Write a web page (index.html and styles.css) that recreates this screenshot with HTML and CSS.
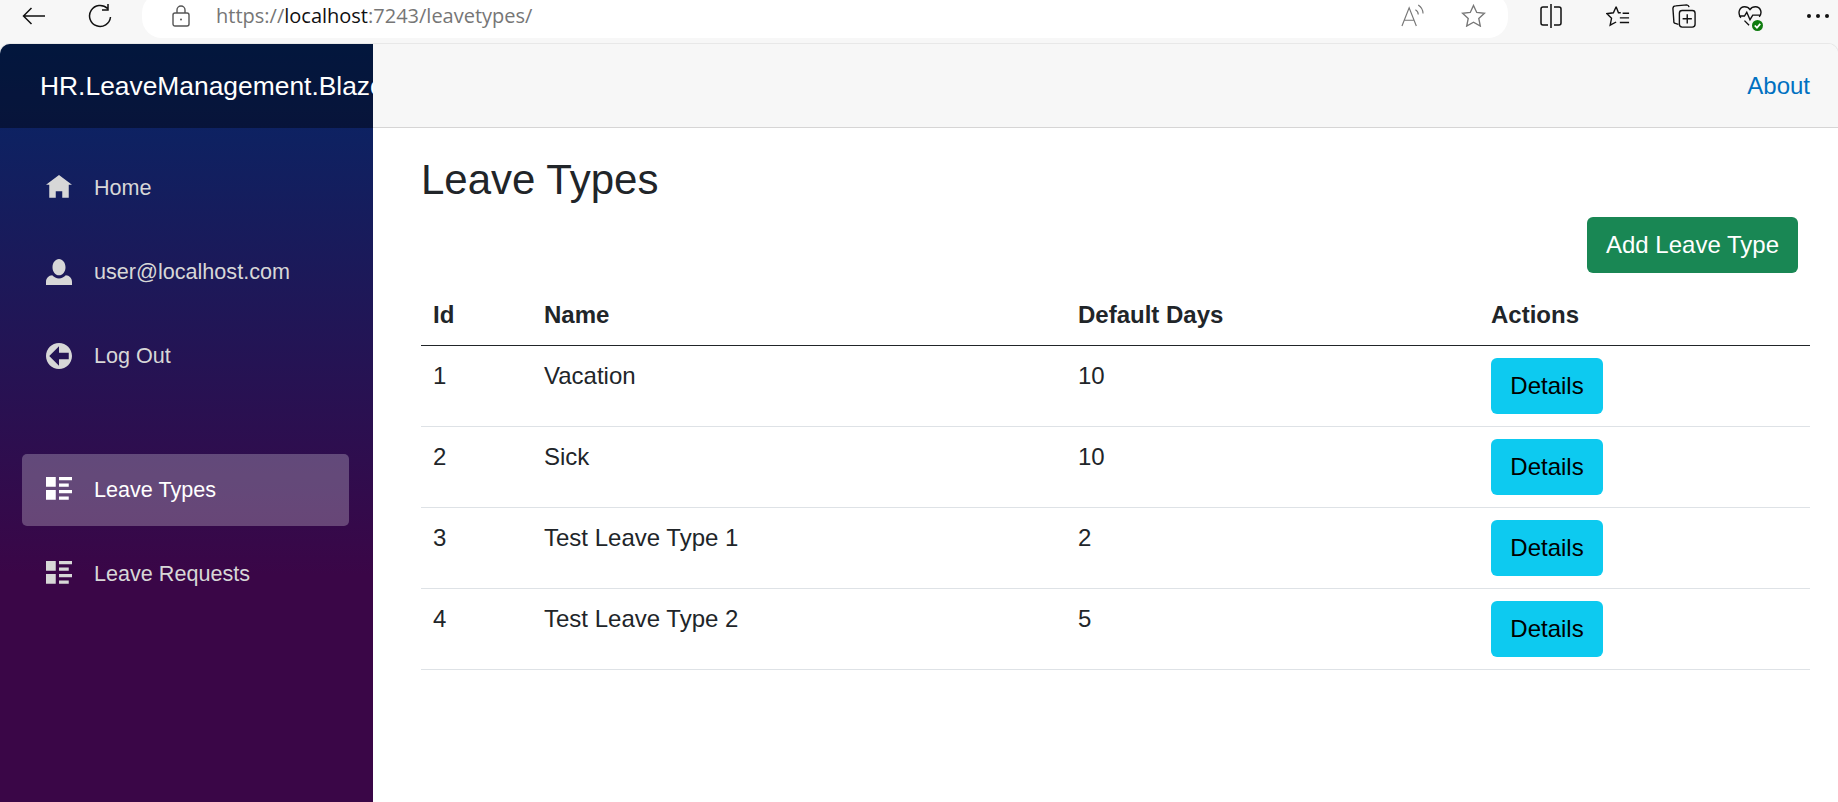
FILE: index.html
```html
<!DOCTYPE html>
<html lang="en">

<head>
    <meta charset="UTF-8">
    <meta name="viewport" content="width=device-width, initial-scale=1.0">
    <title>Leave Types</title>
    <link rel="stylesheet" href="styles.css">
</head>

<body>

    <div class="browser-bar">
        <svg class="tool tool-back" viewBox="0 0 23 18"><path d="M23 9H1.500M9.500 1 1.500 9l8 8" /></svg>
        <svg class="tool tool-reload" viewBox="0 0 24 24"><path d="M19.500 4.500A10.500 10.500 0 1 0 22.500 13M20 0v6h-6" /></svg>
        <div class="address">
            <svg class="lock" viewBox="0 0 18 22"><rect x="1" y="8" width="16" height="13" rx="2" /><path d="M5 8V5a4 4 0 0 1 8 0v3" /><circle class="dot" cx="9" cy="14.500" r="1" /></svg>
            <span class="url">https://<b>localhost</b>:7243/leavetypes/</span>
            <svg class="read" viewBox="0 0 24 24"><path d="M1 23 8.500 4 16 23M3.500 17h10M15 6c2 1 3 3 3 5M18 1c3 2 5 5 5 9" /></svg>
            <svg class="star" viewBox="0 0 26 24"><path d="m13 1.500 3.400 7.300 8 .9-5.900 5.400 1.600 7.900-7.100-4-7.100 4 1.600-7.900L1.600 9.700l8-.9z" /></svg>
        </div>
        <svg class="tool tool-split" viewBox="0 0 24 24"><path d="M9 3H4a2 2 0 0 0-2 2v14a2 2 0 0 0 2 2h5M15 3h5a2 2 0 0 1 2 2v14a2 2 0 0 1-2 2h-5M12 0v24" /></svg>
        <svg class="tool tool-favs" viewBox="0 0 26 24"><path d="M11 2 8 8.500 1 9.500l5 5L4.500 22l6.500-3.500M11 2l2.500 6.500H16M18 9h7M15 14h10M15 19h10" /></svg>
        <svg class="tool tool-coll" viewBox="0 0 26 26"><path d="M7 22 3.500 21a2 2 0 0 1-1.500-2.500L1 5a3 3 0 0 1 3-3l12-1a3 3 0 0 1 2.500 2.500" /><rect x="8" y="7" width="17" height="18" rx="3" /><path d="M16.500 11v10M11.500 16h10" /></svg>
        <div class="tool-heart">
            <svg class="tool" viewBox="0 0 26 24"><path d="M3 14C-1 8 2 2 7 2c3 0 5 1.500 6 3 1-1.500 3-3 6-3 5 0 8 6 4 11M1 12h6l2.500-4 3.500 8 3-5h8M7 17l5 5" /></svg>
            <span class="heart-ok"><svg viewBox="0 0 10 10"><path d="m2.500 5 2 2 3-3.500" /></svg></span>
        </div>
        <div class="tool-more"><i></i><i></i><i></i></div>
    </div>

    <div class="app">
        <div class="sidebar">
            <div class="brand"><span>HR.LeaveManagement.Blazor</span></div>
            <div class="nav">
                <a class="nav-link">
                    <svg viewBox="0 0 8 8"><path d="M4 0l-4 3h1v4h2v-2h2v2h2v-4.030l1 .03-4-3z" /></svg>
                    Home
                </a>
                <a class="nav-link">
                    <svg viewBox="0 0 8 8"><path d="M4 0c-1.100 0-2 1.120-2 2.500s.9 2.500 2 2.500 2-1.120 2-2.500-.9-2.500-2-2.500zm-2.090 5c-1.060.05-1.910.92-1.910 2v1h8v-1c0-1.080-.84-1.950-1.910-2-.54.61-1.280 1-2.090 1-.81 0-1.550-.39-2.090-1z" /></svg>
                    user@localhost.com
                </a>
                <a class="nav-link">
                    <svg viewBox="0 0 8 8"><path d="M4 0c-2.210 0-4 1.790-4 4s1.790 4 4 4 4-1.790 4-4-1.790-4-4-4zm0 1v2h3v2h-3v2l-3-3 3-3z" /></svg>
                    Log Out
                </a>
                <a class="nav-link nav-gap active">
                    <svg viewBox="0 0 8 8"><path d="M0 0v3h3v-3h-3zm4 0v1h4v-1h-4zm0 2v1h3v-1h-3zm-4 2v3h3v-3h-3zm4 0v1h4v-1h-4zm0 2v1h3v-1h-3z" /></svg>
                    Leave Types
                </a>
                <a class="nav-link">
                    <svg viewBox="0 0 8 8"><path d="M0 0v3h3v-3h-3zm4 0v1h4v-1h-4zm0 2v1h3v-1h-3zm-4 2v3h3v-3h-3zm4 0v1h4v-1h-4zm0 2v1h3v-1h-3z" /></svg>
                    Leave Requests
                </a>
            </div>
        </div>

        <div class="main">
            <div class="top-row">
                <a class="about">About</a>
            </div>
            <div class="content">
                <h1>Leave Types</h1>
                <div class="add-row">
                    <button class="btn btn-add">Add Leave Type</button>
                </div>
                <table>
                    <thead>
                        <tr>
                            <th class="col-id">Id</th>
                            <th class="col-name">Name</th>
                            <th class="col-days">Default Days</th>
                            <th>Actions</th>
                        </tr>
                    </thead>
                    <tbody>
                        <tr>
                            <td>1</td>
                            <td>Vacation</td>
                            <td>10</td>
                            <td><button class="btn btn-info">Details</button></td>
                        </tr>
                        <tr>
                            <td>2</td>
                            <td>Sick</td>
                            <td>10</td>
                            <td><button class="btn btn-info">Details</button></td>
                        </tr>
                        <tr>
                            <td>3</td>
                            <td>Test Leave Type 1</td>
                            <td>2</td>
                            <td><button class="btn btn-info">Details</button></td>
                        </tr>
                        <tr>
                            <td>4</td>
                            <td>Test Leave Type 2</td>
                            <td>5</td>
                            <td><button class="btn btn-info">Details</button></td>
                        </tr>
                    </tbody>
                </table>
            </div>
        </div>
    </div>

</body>

</html>
```

FILE: styles.css
```css
html,
body {
    height: 100%;
    margin: 0;
}

body {
    display: flex;
    flex-direction: column;
    overflow: hidden;
    background-color: #f7f7f7;
    font-family: "Liberation Sans", Arial, sans-serif;
    font-size: 24px;
    color: #212529;
}

/* browser toolbar */
.browser-bar {
    display: flex;
    align-items: center;
    height: 44px;
    padding-bottom: 12px;
    box-sizing: border-box;
    flex-shrink: 0;
    overflow: hidden;
}

.browser-bar svg {
    fill: none;
    stroke: #111;
    stroke-width: 1.5;
}

.tool {
    flex-shrink: 0;
    width: 24px;
    height: 24px;
}

.browser-bar .tool-back {
    width: 23px;
    height: 18px;
    margin-left: 22px;
}

.browser-bar .tool-reload {
    margin-left: 43px;
}

.address {
    display: flex;
    align-items: center;
    flex-shrink: 0;
    width: 1366px;
    height: 45px;
    margin-left: 30px;
    margin-top: -1px;
    background-color: #fff;
    border-radius: 20px;
}

.browser-bar .lock {
    width: 18px;
    height: 22px;
    margin-left: 30px;
    stroke: #555;
    stroke-width: 1.4;
}

.browser-bar .lock .dot {
    fill: #555;
    stroke: none;
}

.url {
    margin-left: 26px;
    font-family: "Open Sans", sans-serif;
    font-size: 20px;
    color: #767676;
}

.url b {
    font-weight: normal;
    color: #111;
}

.browser-bar .read {
    width: 23px;
    height: 23px;
    margin-left: auto;
    stroke: #777;
    stroke-width: 1.2;
}

.browser-bar .star {
    width: 25px;
    height: 23px;
    margin-left: 37px;
    margin-right: 22px;
    stroke: #777;
    stroke-width: 1.4;
}

.browser-bar .tool-split {
    margin-left: 31px;
}

.browser-bar .tool-favs {
    margin-left: 43px;
}

.browser-bar .tool-coll {
    margin-left: 42px;
}

.tool-heart {
    position: relative;
    flex-shrink: 0;
    width: 24px;
    height: 24px;
    margin-left: 42px;
}

.heart-ok {
    position: absolute;
    right: -1px;
    bottom: -3px;
    width: 11px;
    height: 11px;
    border-radius: 50%;
    background-color: #107c10;
    display: flex;
}

.browser-bar .heart-ok svg {
    width: 11px;
    height: 11px;
    stroke: #fff;
    stroke-width: 1.6;
}

.tool-more {
    display: flex;
    gap: 5px;
    margin-left: 45px;
}

.tool-more i {
    width: 4px;
    height: 4px;
    border-radius: 50%;
    background-color: #111;
}

/* page */
.app {
    flex: 1;
    display: flex;
    min-height: 0;
    background-color: #fff;
    border-radius: 10px 10px 0 0;
    overflow: hidden;
    box-shadow: 0 0 0 1px #e8e8e8;
}

.sidebar {
    width: 373px;
    flex-shrink: 0;
    background-image: linear-gradient(180deg, rgb(5, 39, 103) 0%, #3a0647 70%);
    overflow: hidden;
}

.brand {
    height: 84px;
    padding-left: 40px;
    background-color: rgba(0, 0, 0, 0.4);
    font-size: 26.400px;
    line-height: 84px;
    color: #fff;
    white-space: nowrap;
    overflow: hidden;
}

.nav {
    display: flex;
    flex-direction: column;
    padding: 24px 24px 0 22px;
}

.nav-link {
    display: flex;
    align-items: center;
    height: 72px;
    margin-bottom: 12px;
    padding-left: 24px;
    border-radius: 5px;
    font-size: 21.600px;
    color: #d7d7d7;
}

.nav-link svg {
    width: 26px;
    height: 26px;
    margin-right: 22px;
    fill: currentColor;
}

.nav-gap {
    margin-top: 50px;
}

.nav-link.active {
    background-color: rgba(255, 255, 255, 0.25);
    color: #fff;
}

.main {
    flex: 1;
    min-width: 0;
}

.top-row {
    display: flex;
    justify-content: flex-end;
    align-items: center;
    height: 83px;
    padding-right: 28px;
    background-color: #f7f7f7;
    border-bottom: 1px solid #d6d5d5;
}

.about {
    color: #0071c1;
}

.content {
    padding: 28px 28px 0 48px;
}

h1 {
    margin: 0 0 13px;
    font-size: 42px;
    font-weight: 400;
    line-height: 48px;
}

.add-row {
    display: flex;
    justify-content: flex-end;
    padding-right: 12px;
    margin-bottom: 15px;
}

.btn {
    height: 56px;
    padding: 0 19px;
    border: none;
    border-radius: 6px;
    font-family: inherit;
    font-size: 24px;
}

.btn-add {
    background-color: #198754;
    color: #fff;
}

.btn-info {
    display: block;
    width: 112px;
    padding: 0;
    background-color: #0dcaf0;
    color: #000;
}

table {
    width: 100%;
    table-layout: fixed;
    border-collapse: collapse;
}

th,
td {
    padding: 12px;
    text-align: left;
    vertical-align: top;
    line-height: 35px;
}

th {
    padding: 9px 12px 13px;
    border-bottom: 1px solid #212529;
}

td {
    border-bottom: 1px solid #dee2e6;
}

.col-id {
    width: 87px;
}

.col-name {
    width: 510px;
}

.col-days {
    width: 389px;
}
```
